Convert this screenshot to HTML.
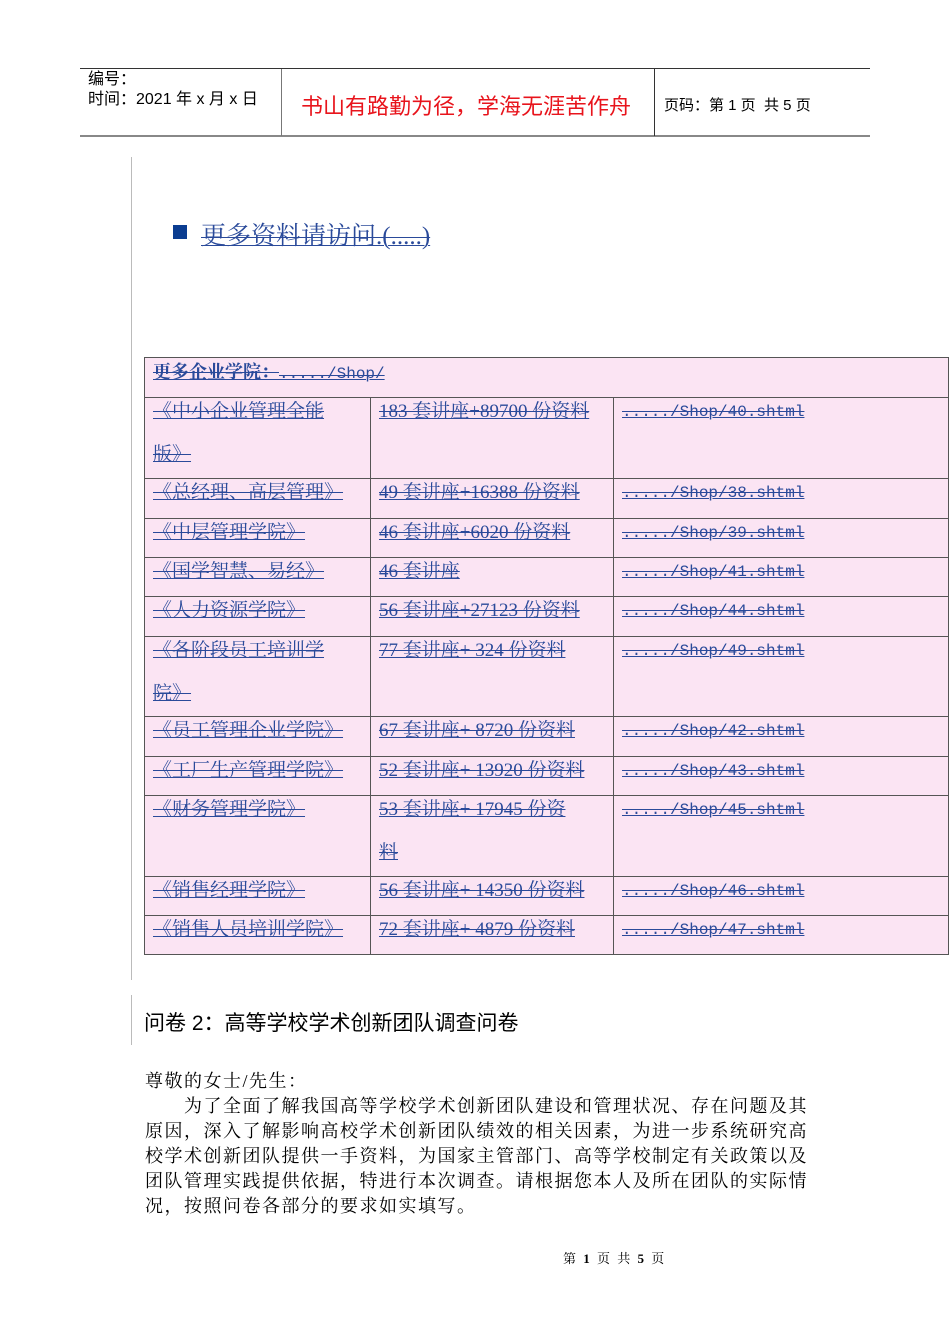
<!DOCTYPE html>
<html><head><meta charset="utf-8"><style>
body{margin:0;width:950px;height:1344px;background:#fff;position:relative;font-family:"Liberation Serif","Noto Serif CJK SC",serif;overflow:hidden}
.a{position:absolute;white-space:nowrap}
.hl{position:absolute;background:#555}
.lk{color:#2a4a9a;text-decoration:underline line-through;text-decoration-thickness:1px;font-size:19px}
.m{font-family:"Liberation Mono",monospace;font-size:16px}
.s{font-family:"Liberation Sans","Noto Sans CJK SC",sans-serif}
.t{position:absolute;left:144px;top:357px;width:805px;height:598px;background:#fbe4f3;border:1px solid #555;box-sizing:border-box}
.c{position:absolute;line-height:42px;white-space:nowrap}
</style></head><body>
<div class="hl" style="left:80px;top:68px;width:790px;height:1px;background:#333"></div>
<div class="hl" style="left:80px;top:135px;width:790px;height:2px;background:#888"></div>
<div class="hl" style="left:281px;top:69px;width:1px;height:67px;background:#777"></div>
<div class="hl" style="left:654px;top:69px;width:1px;height:67px;background:#333"></div>
<div class="a s" style="left:88px;top:70px;font-size:16px;line-height:20px">编号：<br>时间：2021 年 x 月 x 日</div>
<div class="a s" style="left:301px;top:89px;font-size:22px;color:#e8141c">书山有路勤为径，学海无涯苦作舟</div>
<div class="a s" style="left:664px;top:94px;font-size:15px">页码：第 1 页&nbsp; 共 5 页</div>
<div class="hl" style="left:131px;top:157px;width:1px;height:823px;background:#bbb"></div>
<div class="hl" style="left:131px;top:995px;width:1px;height:50px;background:#bbb"></div>
<div class="a" style="left:173px;top:225px;width:14px;height:14px;background:#0b3d91"></div>
<div class="a lk" style="left:201px;top:216px;font-size:25px">更多资料请访问.(.....)</div>

<div class="t"></div>
<!-- horizontal lines -->
<div class="hl" style="left:144px;top:397px;width:805px;height:1px"></div>
<div class="hl" style="left:144px;top:478px;width:805px;height:1px"></div>
<div class="hl" style="left:144px;top:518px;width:805px;height:1px"></div>
<div class="hl" style="left:144px;top:557px;width:805px;height:1px"></div>
<div class="hl" style="left:144px;top:596px;width:805px;height:1px"></div>
<div class="hl" style="left:144px;top:636px;width:805px;height:1px"></div>
<div class="hl" style="left:144px;top:716px;width:805px;height:1px"></div>
<div class="hl" style="left:144px;top:756px;width:805px;height:1px"></div>
<div class="hl" style="left:144px;top:795px;width:805px;height:1px"></div>
<div class="hl" style="left:144px;top:876px;width:805px;height:1px"></div>
<div class="hl" style="left:144px;top:915px;width:805px;height:1px"></div>
<div class="hl" style="left:370px;top:397px;width:1px;height:558px"></div>
<div class="hl" style="left:613px;top:397px;width:1px;height:558px"></div>

<div class="c" style="left:153px;top:351px"><span class="lk" style="font-weight:bold;font-size:18px">更多企业学院：<span class="m" style="font-weight:normal">...../Shop/</span></span></div>

<div class="c" style="left:153px;top:391px"><span class="lk">《中小企业管理全能</span><br><span class="lk">版》</span></div>
<div class="c" style="left:379px;top:391px"><span class="lk">183 套讲座+89700 份资料</span></div>
<div class="c" style="left:622px;top:391px"><span class="lk m">...../Shop/40.shtml</span></div>

<div class="c" style="left:153px;top:472px"><span class="lk">《总经理、高层管理》</span></div>
<div class="c" style="left:379px;top:472px"><span class="lk">49 套讲座+16388 份资料</span></div>
<div class="c" style="left:622px;top:472px"><span class="lk m">...../Shop/38.shtml</span></div>

<div class="c" style="left:153px;top:512px"><span class="lk">《中层管理学院》</span></div>
<div class="c" style="left:379px;top:512px"><span class="lk">46 套讲座+6020 份资料 </span></div>
<div class="c" style="left:622px;top:512px"><span class="lk m">...../Shop/39.shtml</span></div>

<div class="c" style="left:153px;top:551px"><span class="lk">《国学智慧、易经》</span></div>
<div class="c" style="left:379px;top:551px"><span class="lk">46 套讲座</span></div>
<div class="c" style="left:622px;top:551px"><span class="lk m">...../Shop/41.shtml</span></div>

<div class="c" style="left:153px;top:590px"><span class="lk">《人力资源学院》</span></div>
<div class="c" style="left:379px;top:590px"><span class="lk">56 套讲座+27123 份资料</span></div>
<div class="c" style="left:622px;top:590px"><span class="lk m">...../Shop/44.shtml</span></div>

<div class="c" style="left:153px;top:630px"><span class="lk">《各阶段员工培训学</span><br><span class="lk">院》</span></div>
<div class="c" style="left:379px;top:630px"><span class="lk">77 套讲座+ 324 份资料</span></div>
<div class="c" style="left:622px;top:630px"><span class="lk m">...../Shop/49.shtml</span></div>

<div class="c" style="left:153px;top:710px"><span class="lk">《员工管理企业学院》</span></div>
<div class="c" style="left:379px;top:710px"><span class="lk">67 套讲座+ 8720 份资料</span></div>
<div class="c" style="left:622px;top:710px"><span class="lk m">...../Shop/42.shtml</span></div>

<div class="c" style="left:153px;top:750px"><span class="lk">《工厂生产管理学院》</span></div>
<div class="c" style="left:379px;top:750px"><span class="lk">52 套讲座+ 13920 份资料</span></div>
<div class="c" style="left:622px;top:750px"><span class="lk m">...../Shop/43.shtml</span></div>

<div class="c" style="left:153px;top:789px"><span class="lk">《财务管理学院》</span></div>
<div class="c" style="left:379px;top:789px"><span class="lk">53 套讲座+ 17945 份资</span><br><span class="lk">料 </span></div>
<div class="c" style="left:622px;top:789px"><span class="lk m">...../Shop/45.shtml</span></div>

<div class="c" style="left:153px;top:870px"><span class="lk">《销售经理学院》</span></div>
<div class="c" style="left:379px;top:870px"><span class="lk">56 套讲座+ 14350 份资料</span></div>
<div class="c" style="left:622px;top:870px"><span class="lk m">...../Shop/46.shtml</span></div>

<div class="c" style="left:153px;top:909px"><span class="lk">《销售人员培训学院》</span></div>
<div class="c" style="left:379px;top:909px"><span class="lk">72 套讲座+ 4879 份资料</span></div>
<div class="c" style="left:622px;top:909px"><span class="lk m">...../Shop/47.shtml</span></div>

<div class="a s" style="left:144px;top:1007px;font-size:21px">问卷 2：高等学校学术创新团队调查问卷</div>
<div class="a" style="left:145px;top:1069px;font-size:18px;line-height:25px;letter-spacing:1.5px">尊敬的女士/先生：<br>　　为了全面了解我国高等学校学术创新团队建设和管理状况、存在问题及其<br>原因，深入了解影响高校学术创新团队绩效的相关因素，为进一步系统研究高<br>校学术创新团队提供一手资料，为国家主管部门、高等学校制定有关政策以及<br>团队管理实践提供依据，特进行本次调查。请根据您本人及所在团队的实际情<br>况，按照问卷各部分的要求如实填写。</div>
<div class="a" style="left:563px;top:1248px;font-size:13px;letter-spacing:2px">第 <b>1</b> 页 共 <b>5</b> 页</div>
</body></html>
